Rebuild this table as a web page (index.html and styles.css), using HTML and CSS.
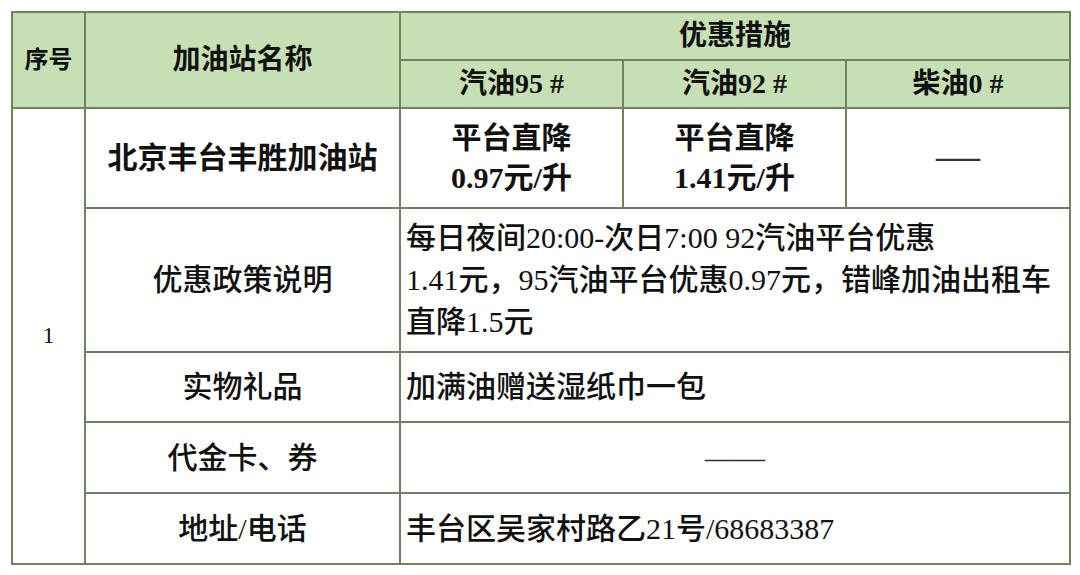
FILE: index.html
```html
<!DOCTYPE html>
<html lang="zh-CN">
<head>
<meta charset="utf-8">
<title>加油站优惠措施</title>
<link rel="stylesheet" href="styles.css">
</head>
<body>
<table class="grid">
  <colgroup>
    <col class="c-no">
    <col class="c-name">
    <col class="c-fuel">
    <col class="c-fuel">
    <col class="c-diesel">
  </colgroup>
  <thead>
    <tr class="h1">
      <th rowspan="2" class="small">序号</th>
      <th rowspan="2">加油站名称</th>
      <th colspan="3">优惠措施</th>
    </tr>
    <tr class="h2">
      <th>汽油95 #</th>
      <th>汽油92 #</th>
      <th>柴油0 #</th>
    </tr>
  </thead>
  <tbody>
    <tr class="r-station">
      <td rowspan="5" class="num">1</td>
      <td class="bold">北京丰台丰胜加油站</td>
      <td class="bold price">平台直降<br>0.97元/升</td>
      <td class="bold price">平台直降<br>1.41元/升</td>
      <td class="center"><span class="dash">—</span></td>
    </tr>
    <tr class="r-policy">
      <td class="label">优惠政策说明</td>
      <td colspan="3" class="text policy">每日夜间20:00-次日7:00 92汽油平台优惠<br>1.41元，95汽油平台优惠0.97元，错峰加油出租车<br>直降1.5元</td>
    </tr>
    <tr class="r-gift">
      <td class="label">实物礼品</td>
      <td colspan="3" class="text">加满油赠送湿纸巾一包</td>
    </tr>
    <tr class="r-card">
      <td class="label">代金卡、券</td>
      <td colspan="3" class="center"><span class="dash2">——</span></td>
    </tr>
    <tr class="r-addr">
      <td class="label">地址/电话</td>
      <td colspan="3" class="text">丰台区吴家村路乙21号/68683387</td>
    </tr>
  </tbody>
</table>
</body>
</html>
```
FILE: styles.css
```css
html, body {
  margin: 0;
  padding: 0;
  background: #ffffff;
}
body {
  padding: 11px 0 0 11px;
  font-family: "Liberation Serif", "Noto Sans CJK SC", serif;
  color: #111111;
}
.grid {
  border-collapse: collapse;
  table-layout: fixed;
  width: 1059px;
}
.c-no { width: 73px; }
.c-name { width: 315px; }
.c-fuel { width: 223px; }
.c-diesel { width: 224px; }

.grid th,
.grid td {
  border: 2px solid #6f8363;
  padding: 0 5px;
  vertical-align: middle;
}
.grid th {
  background: #c6e0b4;
  font-weight: 700;
  font-size: 28px;
  line-height: 1.2;
  text-align: center;
}
.grid th.small { font-size: 24px; }
.h1 { height: 48px; }
.h2 { height: 48px; }
.r-station { height: 100px; }
.r-policy { height: 144px; }
.r-gift { height: 70px; }
.r-card { height: 71px; }
.r-addr { height: 71px; }

.grid td {
  font-size: 30px;
  font-weight: 500;
  line-height: 42px;
}
.grid td.num {
  text-align: center;
  font-size: 23px;
  font-weight: 400;
}
.grid td.bold {
  font-weight: 700;
  text-align: center;
}
.grid td.price {
  line-height: 40px;
}
.grid td.label {
  text-align: center;
}
.grid td.text {
  text-align: left;
  white-space: nowrap;
}
.grid td.policy {
  line-height: 42px;
}
.grid td.center {
  text-align: center;
}
.dash {
  font-size: 44px;
  font-weight: 400;
  color: #333333;
}
.dash2 {
  font-size: 30px;
  font-weight: 400;
  color: #333333;
}
```
